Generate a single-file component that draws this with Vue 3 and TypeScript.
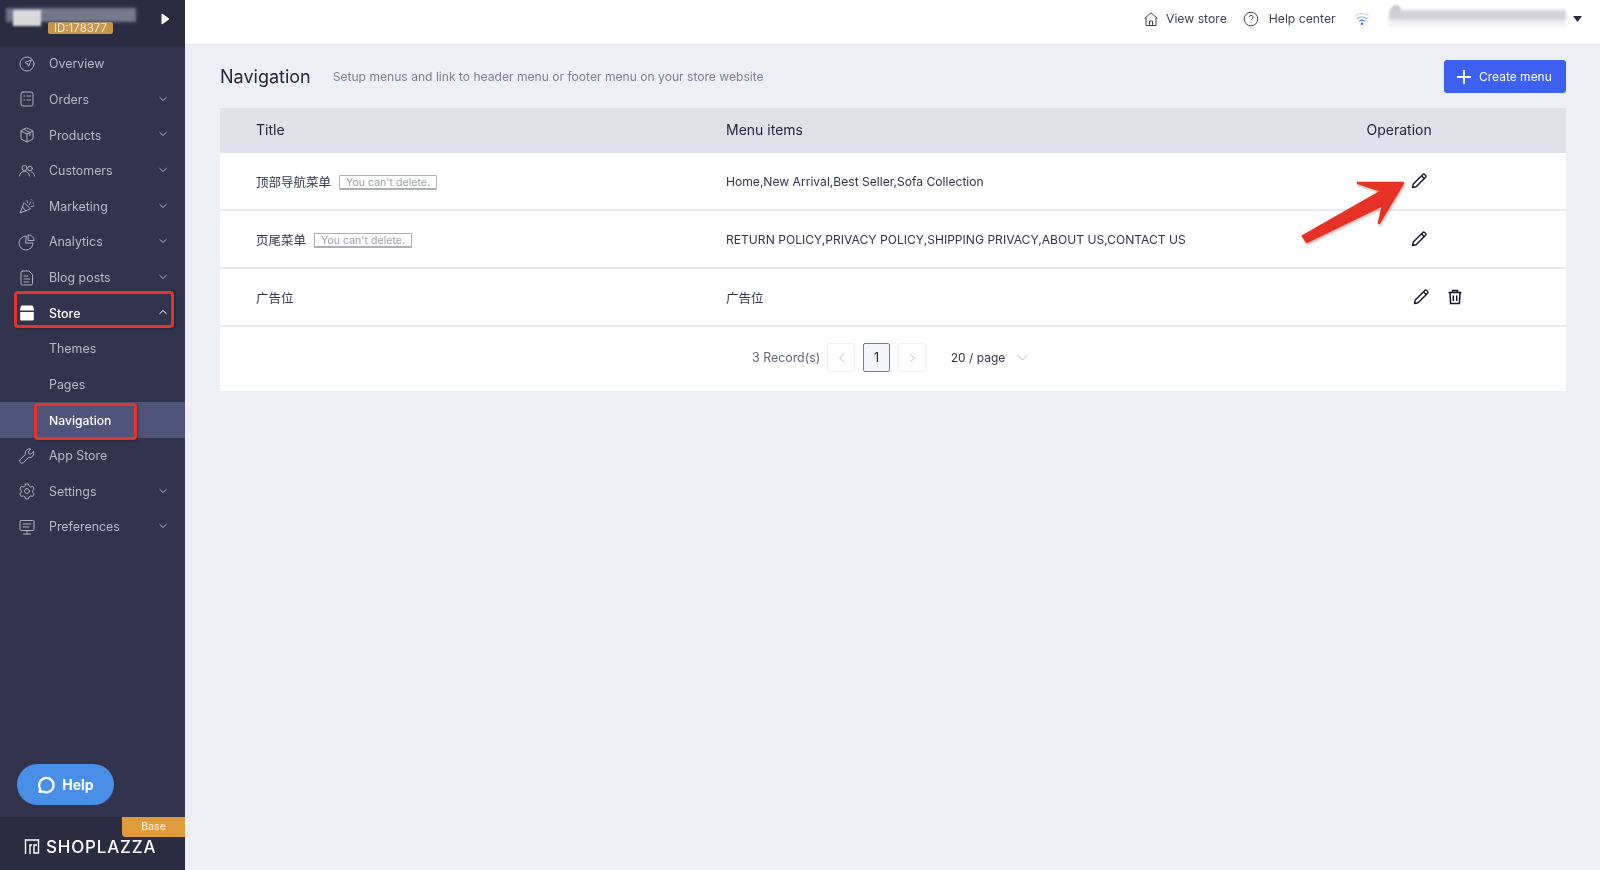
<script setup lang="ts">
interface NavItem { label: string; icon: string; caret?: boolean }
const topItems: NavItem[] = [
  { label: 'Overview', icon: 'overview' },
  { label: 'Orders', icon: 'orders', caret: true },
  { label: 'Products', icon: 'products', caret: true },
  { label: 'Customers', icon: 'customers', caret: true },
  { label: 'Marketing', icon: 'marketing', caret: true },
  { label: 'Analytics', icon: 'analytics', caret: true },
  { label: 'Blog posts', icon: 'blog', caret: true },
]
const bottomItems: NavItem[] = [
  { label: 'App Store', icon: 'app' },
  { label: 'Settings', icon: 'settings', caret: true },
  { label: 'Preferences', icon: 'prefs', caret: true },
]
const icons: Record<string, string> = {
  overview: '<circle cx="10" cy="10" r="7"/><path d="M14 6l-6 2.500 2.500 1 1 2.500z"/>',
  orders: '<rect x="4" y="3" width="12" height="14" rx="2"/><path d="M7 7h.8M7 11h.8M10 7h3.500M10 11h3.500"/>',
  products: '<path d="M10 3l6 3v8l-6 3-6-3V6z"/><path d="M4 6l6 3 6-3M10 9v8M7 4.500l6 3v3"/>',
  customers: '<circle cx="7.500" cy="7" r="2.600"/><path d="M2.500 15c.4-3 2.300-4.600 5-4.600s4.600 1.600 5 4.600"/><circle cx="13" cy="7.500" r="2.300"/><path d="M14.500 11c1.700.5 2.700 1.800 3 4"/>',
  marketing: '<path d="M7 7L3 17l10-4z"/><path d="M5.500 11l3.500 4M10 4.500l.5 2M12 9l2-3M14 10.500l3-.5M14 3.500l.5.5M16 7h.6"/>',
  analytics: '<path d="M9 4a7 7 0 1 0 7 7H9z"/><path d="M11.500 2.800a6 6 0 0 1 5.700 5.700h-5.700z"/>',
  blog: '<path d="M5.500 3H12l3.500 3.500V15.500a1.500 1.500 0 0 1-1.500 1.500H5.500A1.500 1.500 0 0 1 4 15.500v-11A1.500 1.500 0 0 1 5.500 3z"/><path d="M7 8h4M7 11h6M7 14h5"/>',
  app: '<path d="M16.500 5.500l-2.800 2.600-2-.5-.5-2L14 3a4.300 4.300 0 0 0-5.500 5.300L3.200 13.600a2.200 2.200 0 0 0 3.100 3.100l5.300-5.200a4.300 4.300 0 0 0 4.900-6z"/>',
  settings: '<circle cx="10" cy="10" r="2.400"/><path d="M8.500 3h3l.5 2 1.700 1 2-.6 1.500 2.600-1.500 1.500v1.900l1.500 1.500-1.500 2.600-2-.6-1.700 1-.5 2h-3l-.5-2-1.700-1-2 .6-1.500-2.600L4.300 11V9.500L2.800 8l1.500-2.600 2 .6 1.700-1z"/>',
  prefs: '<rect x="3" y="3.500" width="14" height="10" rx="1"/><path d="M6 7h8M6 10h6M10 13.500V17M6.500 17h7"/>',
}
const rows = [
  { title: '顶部导航菜单', locked: true, items: 'Home,New Arrival,Best Seller,Sofa Collection', del: false },
  { title: '页尾菜单', locked: true, items: 'RETURN POLICY,PRIVACY POLICY,SHIPPING PRIVACY,ABOUT US,CONTACT US', del: false },
  { title: '广告位', locked: false, items: '广告位', del: true },
]
</script>

<template>
  <div class="page">
    <aside class="side">
      <div class="brand">
        <span class="id">ID:178377</span>
        <div class="blur-logo"></div>
        <div class="blur-patch"></div>
        <svg class="play" width="10" height="12" viewBox="0 0 10 12"><path d="M1 1l7 5-7 5z" fill="#fff" stroke="#fff" stroke-linejoin="round"/></svg>
      </div>
      <nav class="nav">
        <a v-for="it in topItems" :key="it.label" class="item">
          <svg class="ico" viewBox="0 0 20 20" v-html="icons[it.icon]"></svg>
          <span>{{ it.label }}</span>
          <svg v-if="it.caret" class="caret" viewBox="0 0 10 6"><path d="M1.500 1.200L5 4.500l3.500-3.300"/></svg>
        </a>
        <a class="item active">
          <svg class="ico" viewBox="0 0 20 20"><path d="M5 2.500h10a1 1 0 0 1 1 .7l1.200 4.300H2.800L4 3.200a1 1 0 0 1 1-.7z" fill="#fff" stroke="none"/><path d="M3.200 9h13.600v7.500a1 1 0 0 1-1 1H4.200a1 1 0 0 1-1-1z" fill="#fff" stroke="none"/></svg>
          <span>Store</span>
          <svg class="caret" viewBox="0 0 10 6"><path d="M1.500 4.800L5 1.500l3.500 3.300"/></svg>
          <i class="mark mark-store"></i>
        </a>
        <a class="item sub">Themes</a>
        <a class="item sub">Pages</a>
        <a class="item sub current">Navigation<i class="mark mark-nav"></i></a>
        <a v-for="it in bottomItems" :key="it.label" class="item">
          <svg class="ico" viewBox="0 0 20 20" v-html="icons[it.icon]"></svg>
          <span>{{ it.label }}</span>
          <svg v-if="it.caret" class="caret" viewBox="0 0 10 6"><path d="M1.500 1.200L5 4.500l3.500-3.300"/></svg>
        </a>
      </nav>
      <button class="help">
        <svg width="20" height="20" viewBox="0 0 20 20" fill="none" stroke="#fff" stroke-width="2.200" stroke-linecap="round" stroke-linejoin="round"><path d="M3.500 17l.8-3A7.200 7.200 0 1 1 7 16.500z"/></svg>
        Help
      </button>
      <div class="foot">
        <span class="base">Base</span>
        <svg class="logo" width="16" height="15" viewBox="0 0 16 15" fill="none" stroke="#fff" stroke-width="1.400"><path d="M1.500 15V1H14.500V14H10V6H13M6 15V6H8" /></svg>
        <span class="wordmark">SHOPLAZZA</span>
      </div>
    </aside>

    <div class="main">
      <header class="top">
        <a class="tlink">
          <svg width="16" height="16" viewBox="0 0 16 16" fill="none" stroke="#3f4254" stroke-width="1"><path d="M1.500 7.500L8 1.800l6.500 5.700M3 6.500V14.500h10V6.500M6.500 14.500V10h3v4.500"/></svg>
          View store
        </a>
        <a class="tlink help-link">
          <svg width="16" height="16" viewBox="0 0 16 16" fill="none" stroke="#3f4254" stroke-width="1"><circle cx="8" cy="8" r="6.800"/><path d="M6.200 6.300a1.900 1.900 0 1 1 2.700 1.700c-.6.300-.9.700-.9 1.400M8 11.300v.5"/></svg>
          Help center
        </a>
        <svg class="wifi" width="16" height="14" viewBox="0 0 16 14" fill="none" stroke-linecap="round"><path d="M1 4.200C5 .8 11 .8 15 4.200" stroke="#b9c8ee" stroke-width="1"/><path d="M3.200 6.600c2.800-2.200 6.800-2.200 9.600 0" stroke="#6f93e8" stroke-width="1.100"/><path d="M5.500 9c1.500-1 3.500-1 5 0" stroke="#4a72e3" stroke-width="1.100"/><circle cx="8" cy="11.800" r="1.300" fill="#3f66e0"/></svg>
        <div class="user"><i class="avatar"></i><div class="blur-user"></div></div>
        <svg width="9" height="6" viewBox="0 0 9 6" class="drop"><path d="M0 0h9L4.500 6z" fill="#2b2e42"/></svg>
      </header>

      <main class="content">
        <div class="head">
          <h1>Navigation</h1>
          <p>Setup menus and link to header menu or footer menu on your store website</p>
          <button class="create">
            <svg width="16" height="16" viewBox="0 0 16 16" stroke="#fff" stroke-width="1.800"><path d="M8 1v14M1 8h14"/></svg>
            Create menu
          </button>
        </div>

        <section class="table">
          <div class="row thead">
            <div class="c1">Title</div>
            <div class="c2">Menu items</div>
            <div class="c3">Operation</div>
          </div>
          <div v-for="(r, i) in rows" :key="i" class="row tr">
            <div class="c1 cn">
              {{ r.title }}
              <span v-if="r.locked" class="tag">You can't delete.</span>
            </div>
            <div class="c2" :class="{ cjk: r.del }">{{ r.items }}</div>
            <div class="c3 ops" :class="{ wide: r.del }">
              <svg width="18" height="18" viewBox="0 0 18 18" fill="none" stroke="#16182a" stroke-width="1.400" stroke-linejoin="round"><path d="M2.500 15.500l.8-3.600L12.800 2.400a1.300 1.300 0 0 1 1.900 0l.9.900a1.300 1.300 0 0 1 0 1.900L6.100 14.700z"/><path d="M11.500 3.800l2.700 2.700"/></svg>
              <svg v-if="r.del" width="18" height="18" viewBox="0 0 18 18" fill="none" stroke="#16182a" stroke-width="1.500"><path d="M2.500 4.500h13M6.500 4.500V2.500h5v2M4 4.500l.6 11h8.800l.6-11M7.300 7.500v5.500M10.700 7.500v5.500"/></svg>
            </div>
          </div>
          <div class="pager">
            <span class="rec">3 Record(s)</span>
            <span class="pg"><svg width="7" height="10" viewBox="0 0 7 10" fill="none" stroke="#bcbfc9"><path d="M6 1L1.500 5 6 9"/></svg></span>
            <span class="pg on">1</span>
            <span class="pg"><svg width="7" height="10" viewBox="0 0 7 10" fill="none" stroke="#bcbfc9"><path d="M1 1l4.500 4L1 9"/></svg></span>
            <span class="size">20 / page</span>
            <svg width="11" height="7" viewBox="0 0 11 7" fill="none" stroke="#b5b8c4"><path d="M.5 1L5.500 6l5-5"/></svg>
          </div>
        </section>
      </main>
    </div>

    <svg class="arrow" width="120" height="80" viewBox="0 0 120 80">
      <defs><filter id="sh" x="-10%" y="-10%" width="125%" height="125%"><feDropShadow dx="1" dy="1.500" stdDeviation="1.500" flood-color="#000" flood-opacity=".3"/></filter></defs>
      <path d="M103 7L58 7 82 15 3 60 7 66 83 29 79 47z" fill="#e63325" stroke="#e63325" stroke-width="2.500" stroke-linejoin="round" filter="url(#sh)"/>
    </svg>
  </div>
</template>

<style>
html, body { margin: 0; background: #eeeff5; }
</style>

<style scoped>
.page { position: relative; display: flex; width: 1600px; height: 870px; overflow: hidden; font-family: Inter, "Noto Sans CJK SC", sans-serif; background: #eeeff5; filter: blur(.35px); }
.side { width: 185px; flex: none; display: flex; flex-direction: column; background: #31344c; color: #b9bbca; }
.brand { position: relative; height: 46px; background: #2a2d41; flex: none; }
.blur-logo { position: absolute; left: 6px; top: 8px; width: 130px; height: 14px; background: linear-gradient(90deg, #70748a 0, #777a8d 100%); filter: blur(1.500px); }
.blur-patch { position: absolute; left: 13px; top: 10px; width: 28px; height: 16px; background: #d9d9dc; filter: blur(1.200px); }
.id { position: absolute; left: 48px; top: 22px; width: 65px; height: 12px; line-height: 12px; border-radius: 2px; background: #c8964a; color: #f3ecdc; font-size: 11.500px; text-align: center; }
.play { position: absolute; left: 161px; top: 13px; }
.nav { flex: none; }
.item { position: relative; display: flex; align-items: center; height: 35.640px; padding-left: 17px; box-sizing: border-box; font-size: 12.400px; }
.item > span { margin-left: 12px; }
.ico { width: 20px; height: 20px; flex: none; fill: none; stroke: #aeb0c1; stroke-width: 1; stroke-linecap: round; stroke-linejoin: round; }
.caret { position: absolute; left: 158px; top: 14px; width: 10px; height: 6px; fill: none; stroke: #b3b5c5; stroke-width: 1; }
.active { color: #fff; font-weight: 500; }
.active .caret { stroke: #fff; }
.sub { padding-left: 49px; }
.current { background: #50547a; color: #fff; font-weight: 500; font-size: 12.200px; }
.mark { position: absolute; border: 3px solid #e2352b; border-radius: 4px; box-sizing: border-box; box-shadow: 1px 1px 3px rgba(0,0,0,.35); }
.mark-store { left: 14px; top: -4px; width: 160px; height: 37px; }
.mark-nav { left: 34px; top: 1px; width: 103px; height: 37px; }
.help { display: flex; align-items: center; justify-content: center; gap: 6px; width: 97px; height: 41px; margin: auto 0 0 16.500px; border: 0; border-radius: 21px; background: #4a8fe7; color: #fff; font: 700 14px Inter, sans-serif; }
.foot { position: relative; display: flex; align-items: center; height: 53px; margin-top: 12px; flex: none; background: #2a2d41; padding: 6px 0 0 24px; box-sizing: border-box; }
.base { position: absolute; left: 122px; top: 0; width: 63px; height: 20px; line-height: 20px; text-align: center; background: #e09c3a; border-radius: 0 0 0 4px; color: #f8ecd6; font-size: 10.500px; font-weight: 500; }
.logo { margin-right: 6px; }
.wordmark { color: #fff; font-size: 17px; font-weight: 500; letter-spacing: .8px; }

.main { flex: 1; min-width: 0; display: flex; flex-direction: column; }
.top { height: 45px; box-sizing: border-box; flex: none; display: flex; align-items: center; background: #fff; border-bottom: 1px solid #dfe1e8; color: #3f4254; font-size: 12.200px; padding: 0 0 7px 958px; }
.tlink { display: flex; align-items: center; gap: 7px; margin-right: 16px; }
.help-link { gap: 10px; margin-right: 18px; }
.wifi { margin-right: 19px; }
.user { position: relative; }
.avatar { position: absolute; left: 2px; top: -5px; width: 10px; height: 12px; border-radius: 5px 5px 0 0; background: #c9c9cd; filter: blur(1px); }
.blur-user { width: 177px; height: 17px; background: linear-gradient(#cfcfd3 60%, #efeff1 60%); filter: blur(1.500px); opacity: .9; }
.drop { margin-left: 7px; }
.content { flex: 1; padding: 15px 34px 0 35px; }
.head { display: flex; align-items: center; height: 33px; margin-bottom: 15px; }
h1 { margin: 0; font-size: 18px; font-weight: 400; color: #23263b; }
p { margin: 0 0 0 22px; font-size: 12.100px; color: #7d7f96; }
.create { display: flex; align-items: center; gap: 7px; margin-left: auto; width: 122px; height: 33px; padding: 0 0 0 12px; border: 0; border-radius: 3px; background: #3c60ef; color: #fff; font: 12px Inter, sans-serif; }
.table { background: #fff; }
.row { display: flex; align-items: center; padding-left: 36px; }
.thead { height: 44.500px; padding-bottom: 2px; box-sizing: border-box; background: #dfe0e8; color: #23263b; font-size: 14px; }
.tr { height: 58px; box-sizing: border-box; border-bottom: 2px solid #e9eaf1; color: #31344a; font-size: 12.100px; }
.tr .c1, .tr .c2 { margin-top: 2px; }
.c1 { width: 470px; flex: none; display: flex; align-items: center; }
.c2 { width: 640.500px; flex: none; }
.cn { gap: 8px; font-size: 12.500px; }
.cjk { font-size: 12.500px; }
.tag { display: inline-block; height: 15px; line-height: 13px; padding: 0 6px; box-sizing: border-box; border: 1px solid #aeb0b7; border-bottom-width: 2px; border-radius: 1px; color: #9a9ca6; font-size: 10.600px; margin-top: 1px; }
.ops { display: flex; gap: 16px; padding-left: 43px; align-items: center; margin-top: 1px; }
.ops.wide { padding-left: 45px; }
.pager { display: flex; align-items: center; justify-content: flex-start; height: 64px; padding: 0 0 2px 532px; box-sizing: border-box; font-size: 12.400px; color: #62647a; }
.rec { margin-right: 7px; }
.pg { display: flex; align-items: center; justify-content: center; width: 27.500px; height: 29px; box-sizing: border-box; border: 1px solid #eeeff3; border-radius: 2px; margin-right: 8px; }
.pg.on { border: 1px solid #5a7cea; background: #f3f5fb; color: #23263b; }
.size { margin: 0 12px 0 17px; color: #34374c; font-size: 12px; }
.arrow { position: absolute; left: 1300px; top: 176px; }
</style>
